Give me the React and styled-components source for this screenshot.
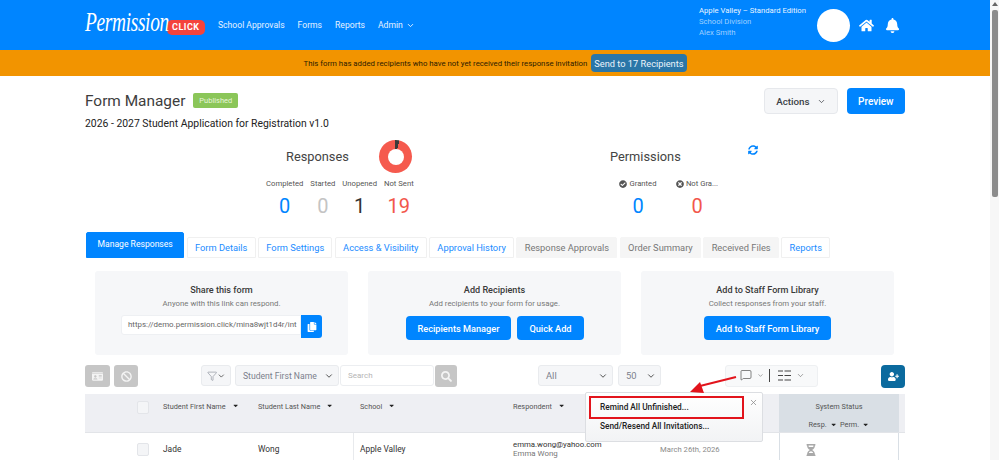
import styled, { createGlobalStyle } from 'styled-components';
import { FaHome, FaBell, FaSyncAlt, FaCopy, FaSearch, FaBan, FaIdCard, FaUserPlus, FaHourglassHalf, FaCheckCircle, FaTimesCircle, FaCaretDown } from 'react-icons/fa';
import { ChevronDown, Filter, MessageSquare, X } from 'lucide-react';

const GlobalStyle = createGlobalStyle`
  html, body {
    margin: 0;
    height: 460px;
    overflow: hidden;
    background: #fff;
    font-family: Roboto, "Liberation Sans", sans-serif;
  }
`;

const Page = styled.div`
  width: 990px;
  position: relative;
`;

const ScrollTrack = styled.div`
  position: fixed;
  top: 0;
  right: 0;
  width: 9px;
  height: 460px;
  background: #f7f7f7;
`;

const ScrollThumb = styled.div`
  position: absolute;
  top: 10px;
  left: 2px;
  width: 6px;
  height: 187px;
  border-radius: 2px;
  background: #8c8c8c;
`;

const ScrollArrow = styled.div`
  position: absolute;
  top: 2px;
  left: 2px;
  border-left: 3px solid transparent;
  border-right: 3px solid transparent;
  border-bottom: 4px solid #666;
`;

const Header = styled.header`
  height: 50px;
  background: #0085ff;
  padding: 0 85px;
  display: flex;
  align-items: center;
  color: #fff;
`;

const Logo = styled.div`
  width: 133px;
  display: flex;
  align-items: center;
  flex-shrink: 0;
`;

const LogoScript = styled.span`
  font-family: "Liberation Serif", serif;
  font-style: italic;
  font-size: 27px;
  letter-spacing: -0.5px;
  line-height: 1;
  margin-top: -5px;
  transform: scaleX(0.72);
  transform-origin: left;
  width: 82px;
  min-width: 0;
  flex: none;
  white-space: nowrap;
`;

const LogoBadge = styled.span`
  background: #f4433c;
  border-radius: 5px;
  font-size: 9px;
  font-weight: 700;
  letter-spacing: 0.5px;
  line-height: 15px;
  padding: 0 5px;
  margin-top: 4px;
`;

const Nav = styled.nav`
  display: flex;
  align-items: center;
  gap: 13px;
  font-size: 8.6px;
  flex: 1;
`;

const NavLink = styled.a`
  display: flex;
  align-items: center;
  gap: 3px;
  color: #e6f2ff;
`;

const Account = styled.div`
  display: flex;
  flex-direction: column;
  gap: 2px;
  font-size: 7.7px;
  line-height: 9px;
  width: 118px;
  flex: none;
  margin-top: -8px;
  white-space: nowrap;
`;

const AccountName = styled.span`
  color: ${p => (p.$dim ? '#9fd0ff' : '#e8f4ff')};
`;

const Avatar = styled.div`
  width: 33px;
  height: 33px;
  flex: none;
  border-radius: 50%;
  background: #fff;
  margin-right: 9px;
`;

const HeaderIcons = styled.div`
  display: flex;
  align-items: center;
  gap: 11px;
  font-size: 15px;
  margin-right: 5px;
`;

const Banner = styled.div`
  height: 26px;
  background: #f29400;
  display: flex;
  align-items: center;
  justify-content: center;
  gap: 4px;
  font-size: 7.8px;
  color: #2c1c00;
`;

const BannerButton = styled.button`
  height: 18px;
  border: 0;
  border-radius: 4px;
  background: #2a76a8;
  color: #eaf4fb;
  font: 9.25px Roboto, sans-serif;
  padding: 0 3px;
`;

const Container = styled.main`
  width: 820px;
  margin: 0 auto;
`;

const TitleRow = styled.div`
  display: flex;
  align-items: flex-start;
  padding-top: 12px;
`;

const Title = styled.h1`
  margin: 0;
  font-size: 15.4px;
  font-weight: 400;
  color: #3d3d3d;
  line-height: 26px;
`;

const Badge = styled.span`
  background: #8bc659;
  color: #e8f5dc;
  font-size: 7.5px;
  border-radius: 2px;
  padding: 0 6px;
  line-height: 15px;
  margin: 5px 0 0 8px;
`;

const TitleActions = styled.div`
  margin-left: auto;
  display: flex;
  gap: 9px;
`;

const Button = styled.button`
  height: ${p => p.$h || 24}px;
  border: 0;
  border-radius: 4px;
  background: #0085ff;
  color: #fff;
  font: 500 ${p => p.$fs || 9.2}px Roboto, sans-serif;
  padding: 0 ${p => p.$px || 12}px;
  white-space: nowrap;
`;

const ActionsButton = styled(Button)`
  background: #f5f6f8;
  border: 1px solid #e6e8ec;
  color: #3b3f46;
  display: flex;
  align-items: center;
  gap: 7px;
  height: 26px;
`;

const Subtitle = styled.div`
  font-size: 10.4px;
  color: #222;
  line-height: 14px;
  margin-top: 3px;
`;

const Stats = styled.section`
  position: relative;
  display: flex;
  height: 85px;
  margin-top: 9px;
  padding-left: 181px;
`;

const StatGroup = styled.div`
  width: ${p => p.$w}px;
  margin-left: ${p => p.$ml || 0}px;
`;

const StatHead = styled.div`
  height: 33px;
  display: flex;
  align-items: center;
  justify-content: ${p => (p.$center ? 'flex-start' : 'space-between')};
  padding-left: ${p => p.$pl || 0}px;
  padding-right: 4px;
  font-size: 12.8px;
  color: #444;
`;

const Donut = styled.div`
  width: 33px;
  height: 33px;
  border-radius: 50%;
  background: conic-gradient(#3a3a3a 0 14deg, #f55a4e 14deg 360deg);
  display: flex;
  align-items: center;
  justify-content: center;
  &::after {
    content: '';
    width: 16px;
    height: 16px;
    border-radius: 50%;
    background: #fff;
  }
`;

const StatRow = styled.div`
  display: flex;
  gap: ${p => p.$gap || 0}px;
`;

const Stat = styled.div`
  width: ${p => (p.$w ? `${p.$w}px` : 'auto')};
  text-align: center;
  white-space: nowrap;
`;

const StatLabel = styled.div`
  font-size: 7.7px;
  color: #555;
  line-height: 10px;
  margin-top: 6px;
  display: flex;
  align-items: center;
  justify-content: center;
  gap: 2px;
`;

const StatValue = styled.div`
  font-size: 20px;
  line-height: 24px;
  margin-top: 5px;
  color: ${p => p.$c};
`;

const RefreshIcon = styled.div`
  position: absolute;
  left: 663px;
  top: 5px;
  color: #0085ff;
  font-size: 10px;
`;

const Tabs = styled.div`
  display: flex;
  align-items: flex-end;
  gap: 2.5px;
  height: 28px;
  margin: 5px 0 0 1px;
`;

const Tab = styled.div`
  height: ${p => (p.$active ? 26 : 21)}px;
  padding: 0 ${p => (p.$active ? 10.5 : 7.2)}px;
  display: flex;
  align-items: center;
  font-size: ${p => (p.$active ? 8.6 : 9.3)}px;
  padding-bottom: ${p => (p.$active ? 2 : 0)}px;
  box-sizing: border-box;
  border-radius: 2px 2px 0 0;
  white-space: nowrap;
  color: ${p => (p.$active ? '#fff' : p.$muted ? '#777' : '#1b8cff')};
  background: ${p => (p.$active ? '#0085ff' : p.$muted ? '#f5f5f5' : '#fff')};
  border: 1px solid ${p => (p.$active ? '#0085ff' : p.$muted ? '#f5f5f5' : '#f0f0f0')};
`;

const Cards = styled.section`
  display: grid;
  grid-template-columns: repeat(3, 253px);
  gap: 20px;
  padding: 13px 0 0 10px;
`;

const Card = styled.div`
  height: 84px;
  background: #f6f7f9;
  border-radius: 3px;
  display: flex;
  flex-direction: column;
  align-items: center;
  padding-top: 13px;
  box-sizing: border-box;
`;

const CardTitle = styled.div`
  font-size: 9.1px;
  font-weight: 500;
  color: #3a3a3a;
  line-height: 12px;
`;

const CardText = styled.div`
  font-size: 7.8px;
  color: #777;
  line-height: 12px;
  margin-top: 2px;
`;

const CardActions = styled.div`
  display: flex;
  gap: 6px;
  margin-top: 6px;
`;

const LinkBox = styled.div`
  display: flex;
  margin-top: 5px;
  height: 23px;
`;

const LinkInput = styled.div`
  width: 180px;
  box-sizing: border-box;
  height: 20px;
  background: #fff;
  border: 1px solid #eef0f3;
  border-radius: 3px 0 0 3px;
  color: #666;
  font-size: 7.9px;
  line-height: 18px;
  padding-left: 6px;
  overflow: hidden;
  white-space: nowrap;
`;

const CopyButton = styled.div`
  width: 21px;
  height: 23px;
  background: #0085ff;
  color: #fff;
  border-radius: 0 3px 3px 0;
  font-size: 10px;
  display: flex;
  align-items: center;
  justify-content: center;
`;

const Toolbar = styled.section`
  display: flex;
  align-items: flex-start;
  height: 29px;
  margin-top: 10px;
`;

const ToolGroup = styled.div`
  display: flex;
  gap: ${p => p.$gap || 0}px;
  margin-left: ${p => p.$ml || 0}px;
`;

const GrayButton = styled.div`
  width: ${p => p.$w || 24}px;
  height: 22px;
  background: #c6c6c6;
  color: #f4f4f4;
  border-radius: 3px;
  font-size: 11px;
  display: flex;
  align-items: center;
  justify-content: center;
`;

const SelectBox = styled.div`
  width: ${p => p.$w}px;
  height: 21px;
  box-sizing: border-box;
  background: #f5f6f8;
  border: 1px solid #e9ebee;
  border-radius: 3px;
  display: flex;
  align-items: center;
  justify-content: space-between;
  padding: 0 4px 0 ${p => p.$pl || 7}px;
  font-size: ${p => p.$fs || 9.4}px;
  color: #7b7f8c;
  white-space: nowrap;
`;

const SearchInput = styled.div`
  width: 94px;
  height: 21px;
  box-sizing: border-box;
  border: 1px solid #eceef1;
  border-radius: 3px;
  padding-left: 7px;
  font-size: 8px;
  line-height: 19px;
  color: #b5b5b5;
  margin-left: 1px;
`;

const IconBar = styled.div`
  width: 93px;
  height: 22px;
  box-sizing: border-box;
  background: #f8f9fa;
  border: 1px solid #eef0f2;
  border-radius: 3px;
  display: flex;
  align-items: center;
  gap: 5px;
  padding: 0 0 2px 14px;
  color: #444;
`;

const Divider = styled.span`
  width: 1px;
  height: 13px;
  background: #444;
  margin-right: 3px;
`;

const AddButton = styled.div`
  width: 24px;
  height: 23px;
  margin-left: 63px;
  background: #0b6a9e;
  color: #fff;
  border-radius: 4px;
  font-size: 11px;
  display: flex;
  align-items: center;
  justify-content: center;
`;

const TableWrap = styled.section`
  position: relative;
  height: 70px;
`;

const columns = '78px 95px 95px 153px 147px 126px 120px 6px';

const HeaderRow = styled.div`
  display: grid;
  grid-template-columns: ${columns};
  height: 39px;
  background: #eeeff3;
  border-bottom: 1px solid #e2e4e8;
  box-sizing: border-box;
  font-size: 7.3px;
  color: #555;
`;

const HeadCell = styled.div`
  display: flex;
  align-items: center;
  gap: 6px;
  height: 24px;
  padding-left: ${p => p.$pl || 0}px;
  white-space: nowrap;
`;

const CheckCell = styled.div`
  display: flex;
  justify-content: flex-end;
  padding: ${p => (p.$row ? '10px' : '7px')} 14px 0 0;
`;

const Check = styled.div`
  width: 12px;
  height: 13px;
  box-sizing: border-box;
  background: #f4f5f7;
  border: 1px solid #e3e5e9;
  border-radius: 2px;
`;

const StatusHead = styled.div`
  background: #d9dfe5;
  text-align: center;
  padding-top: 8px;
  box-sizing: border-box;
`;

const StatusSub = styled.div`
  display: flex;
  justify-content: center;
  align-items: center;
  gap: 3px;
  margin-top: 9px;
`;

const BodyRow = styled.div`
  display: grid;
  grid-template-columns: ${columns};
  height: 32px;
  color: #333;
`;

const BodyCell = styled.div`
  padding-left: ${p => p.$pl || 0}px;
  font-size: ${p => p.$fs || 8.4}px;
  line-height: 33px;
  color: ${p => p.$c || '#333'};
  border-left: ${p => (p.$line ? '1px solid #e8eaed' : 0)};
  white-space: nowrap;
`;

const StatusCell = styled.div`
  border-left: 1px solid #d9dfe5;
  border-right: 1px solid #d9dfe5;
  padding: 11px 0 0 25px;
  color: #a9a9a9;
  font-size: 12px;
`;

const EmailLine = styled.div`
  line-height: 9px;
  padding-top: 7px;
  font-size: 7.8px;
  color: #333;
`;

const EmailName = styled.div`
  line-height: 10px;
  font-size: 7.9px;
  color: #777;
`;

const Popup = styled.div`
  position: absolute;
  left: 500px;
  top: -2px;
  width: 178px;
  height: 50px;
  box-sizing: border-box;
  background: linear-gradient(#fff, #f2f3f5);
  border: 1px solid #dcdee2;
  border-radius: 2px;
  padding: 3px 0 0 3px;
`;

const PopupHighlight = styled.div`
  width: 155px;
  height: 23px;
  box-sizing: border-box;
  border: 2px solid #e2141c;
  padding-left: 9px;
  font-size: 8.3px;
  font-weight: 500;
  line-height: 19px;
  color: #222;
`;

const PopupItem = styled.div`
  padding-left: 11px;
  font-size: 8.3px;
  font-weight: 500;
  line-height: 14px;
  color: #222;
`;

const PopupClose = styled.div`
  position: absolute;
  top: 5px;
  right: 4px;
  color: #888;
  display: flex;
`;

const Arrow = styled.svg`
  position: absolute;
  left: 680px;
  top: 370px;
  width: 70px;
  height: 30px;
`;

function ColumnsIcon() {
  return (
    <svg width="13" height="11" viewBox="0 0 13 11" fill="none" stroke="#444" strokeWidth="1">
      <path d="M0 1h5M6.5 1h6.5M0 5.5h5M6.5 5.5h6.5M0 10h5M6.5 10h6.5" />
    </svg>
  );
}

export default function App() {
  return (
    <>
      <GlobalStyle />
      <Page>
        <Header>
          <Logo>
            <LogoScript>Permission</LogoScript>
            <LogoBadge>CLICK</LogoBadge>
          </Logo>
          <Nav>
            <NavLink>School Approvals</NavLink>
            <NavLink>Forms</NavLink>
            <NavLink>Reports</NavLink>
            <NavLink>Admin <ChevronDown size={9} strokeWidth={2.5} /></NavLink>
          </Nav>
          <Account>
            <AccountName>Apple Valley – Standard Edition</AccountName>
            <AccountName $dim>School Division</AccountName>
            <AccountName $dim>Alex Smith</AccountName>
          </Account>
          <Avatar />
          <HeaderIcons>
            <FaHome />
            <FaBell />
          </HeaderIcons>
        </Header>

        <Banner>
          This form has added recipients who have not yet received their response invitation
          <BannerButton>Send to 17 Recipients</BannerButton>
        </Banner>

        <Container>
          <TitleRow>
            <Title>Form Manager</Title>
            <Badge>Published</Badge>
            <TitleActions>
              <ActionsButton $fs={9.8} $px={11}>Actions <ChevronDown size={9} /></ActionsButton>
              <Button $h={26} $fs={10} $px={11.5}>Preview</Button>
            </TitleActions>
          </TitleRow>
          <Subtitle>2026 - 2027 Student Application for Registration v1.0</Subtitle>

          <Stats>
            <StatGroup $w={150}>
              <StatHead $pl={20}>
                Responses
                <Donut />
              </StatHead>
              <StatRow $gap={7}>
                <Stat><StatLabel>Completed</StatLabel><StatValue $c="#0085ff">0</StatValue></Stat>
                <Stat><StatLabel>Started</StatLabel><StatValue $c="#c4c4c4">0</StatValue></Stat>
                <Stat><StatLabel>Unopened</StatLabel><StatValue $c="#333">1</StatValue></Stat>
                <Stat><StatLabel>Not Sent</StatLabel><StatValue $c="#f2574c">19</StatValue></Stat>
              </StatRow>
            </StatGroup>
            <StatGroup $w={120} $ml={194}>
              <StatHead $center>Permissions</StatHead>
              <StatRow>
                <Stat $w={56}><StatLabel><FaCheckCircle size={8} /> Granted</StatLabel><StatValue $c="#0085ff">0</StatValue></Stat>
                <Stat $w={62}><StatLabel><FaTimesCircle size={8} /> Not Gra...</StatLabel><StatValue $c="#f2574c">0</StatValue></Stat>
              </StatRow>
            </StatGroup>
            <RefreshIcon><FaSyncAlt /></RefreshIcon>
          </Stats>

          <Tabs>
            <Tab $active>Manage Responses</Tab>
            <Tab>Form Details</Tab>
            <Tab>Form Settings</Tab>
            <Tab>Access &amp; Visibility</Tab>
            <Tab>Approval History</Tab>
            <Tab $muted>Response Approvals</Tab>
            <Tab $muted>Order Summary</Tab>
            <Tab $muted>Received Files</Tab>
            <Tab>Reports</Tab>
          </Tabs>

          <Cards>
            <Card>
              <CardTitle>Share this form</CardTitle>
              <CardText>Anyone with this link can respond.</CardText>
              <LinkBox>
                <LinkInput>https://demo.permission.click/mina8wjt1d4r/int</LinkInput>
                <CopyButton><FaCopy /></CopyButton>
              </LinkBox>
            </Card>
            <Card>
              <CardTitle>Add Recipients</CardTitle>
              <CardText>Add recipients to your form for usage.</CardText>
              <CardActions>
                <Button>Recipients Manager</Button>
                <Button>Quick Add</Button>
              </CardActions>
            </Card>
            <Card>
              <CardTitle>Add to Staff Form Library</CardTitle>
              <CardText>Collect responses from your staff.</CardText>
              <CardActions>
                <Button>Add to Staff Form Library</Button>
              </CardActions>
            </Card>
          </Cards>

          <Toolbar>
            <ToolGroup $gap={4}>
              <GrayButton $w={25}><FaIdCard /></GrayButton>
              <GrayButton><FaBan /></GrayButton>
            </ToolGroup>
            <ToolGroup $ml={63} $gap={4}>
              <SelectBox $w={30} $pl={5}><Filter size={12} strokeWidth={1.3} /><ChevronDown size={10} color="#333" /></SelectBox>
              <SelectBox $w={104} $fs={8.6}>Student First Name<ChevronDown size={10} color="#333" /></SelectBox>
            </ToolGroup>
            <SearchInput>Search</SearchInput>
            <ToolGroup $ml={1}><GrayButton $w={22}><FaSearch /></GrayButton></ToolGroup>
            <ToolGroup $ml={81} $gap={5}>
              <SelectBox $w={75}>All<ChevronDown size={10} color="#333" /></SelectBox>
              <SelectBox $w={43}>50<ChevronDown size={10} color="#333" /></SelectBox>
            </ToolGroup>
            <ToolGroup $ml={64}>
              <IconBar>
                <MessageSquare size={12} strokeWidth={1.3} />
                <ChevronDown size={7} strokeWidth={1.5} />
                <Divider />
                <ColumnsIcon />
                <ChevronDown size={9} strokeWidth={1.3} />
              </IconBar>
            </ToolGroup>
            <AddButton><FaUserPlus /></AddButton>
          </Toolbar>

          <TableWrap>
            <HeaderRow>
              <CheckCell><Check /></CheckCell>
              <HeadCell>Student First Name <FaCaretDown color="#222" /></HeadCell>
              <HeadCell>Student Last Name <FaCaretDown color="#222" /></HeadCell>
              <HeadCell $pl={7}>School <FaCaretDown color="#222" /></HeadCell>
              <HeadCell $pl={7}>Respondent <FaCaretDown color="#222" /></HeadCell>
              <div />
              <StatusHead>
                System Status
                <StatusSub>Resp. <FaCaretDown color="#222" /> Perm. <FaCaretDown color="#222" /></StatusSub>
              </StatusHead>
              <div />
            </HeaderRow>
            <BodyRow>
              <CheckCell $row><Check /></CheckCell>
              <BodyCell>Jade</BodyCell>
              <BodyCell>Wong</BodyCell>
              <BodyCell $line $pl={6}>Apple Valley</BodyCell>
              <BodyCell $pl={7}>
                <EmailLine>emma.wong@yahoo.com</EmailLine>
                <EmailName>Emma Wong</EmailName>
              </BodyCell>
              <BodyCell $pl={7} $fs={7.7} $c="#8a8a8a">March 26th, 2026</BodyCell>
              <StatusCell><FaHourglassHalf /></StatusCell>
            </BodyRow>
            <Popup>
              <PopupHighlight>Remind All Unfinished...</PopupHighlight>
              <PopupItem>Send/Resend All Invitations...</PopupItem>
              <PopupClose><X size={9} /></PopupClose>
            </Popup>
          </TableWrap>
        </Container>

        <Arrow viewBox="0 0 70 30">
          <path d="M56 7 L20 16" stroke="#e2141c" strokeWidth="2" fill="none" />
          <path d="M10 22 L20 12 L24 23 Z" fill="#e2141c" />
        </Arrow>
      </Page>
      <ScrollTrack>
        <ScrollArrow />
        <ScrollThumb />
      </ScrollTrack>
    </>
  );
}
